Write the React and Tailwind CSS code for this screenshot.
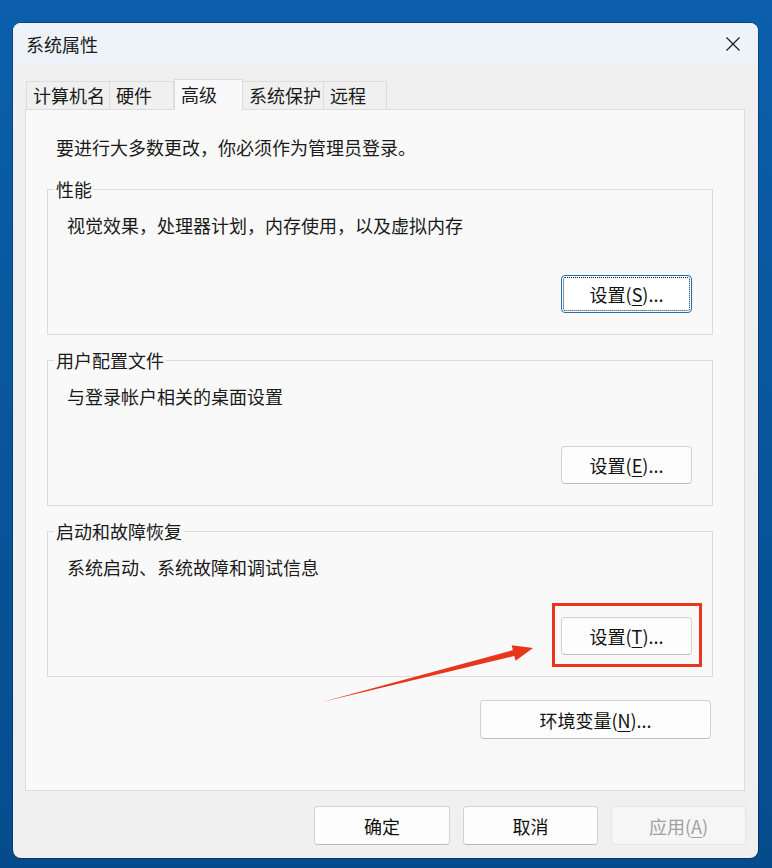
import React from 'react';

const FONT = { fontFamily: "'Noto Sans CJK SC', 'Noto Sans', sans-serif" };

const TABS = [
  { label: '计算机名', w: 'w-[84px]' },
  { label: '硬件', w: 'w-[65px]' },
  { label: '高级', w: 'w-[69px]', active: true },
  { label: '系统保护', w: 'w-[82px]' },
  { label: '远程', w: 'w-[64px]' },
];

const Key = ({ children }) => (
  <span className="underline underline-offset-[3px] decoration-1">{children}</span>
);

const Button = ({ children, className = '', focused, disabled }) => (
  <button
    className={
      'relative flex items-center justify-center rounded-[4px] border text-[18px] leading-none ' +
      (focused
        ? 'border-[#1a6fc4] bg-white text-[#111] '
        : disabled
        ? 'border-[#e6e6e6] bg-[#f6f6f6] text-[#a0a0a0] '
        : 'border-[#d2d2d2] border-b-[#bcbcbc] bg-[#fdfdfd] text-[#111] ') +
      className
    }
  >
    {focused && (
      <span className="absolute inset-[1px] rounded-[2px] border border-dotted border-[#222]" />
    )}
    {children}
  </button>
);

const Group = ({ title, text, children, className = '' }) => (
  <fieldset className={'w-[666px] border border-[#dcdcdc] ' + className}>
    <legend className="ml-[6px] px-[2px] text-[18px] leading-[20px] text-[#1a1a1a]">{title}</legend>
    <div className="pl-[19px] pr-[20px] pb-[21px]">
      <p className="mt-[16px] text-[18px] leading-[20px] text-[#1a1a1a]">{text}</p>
      <div className="mt-[40px] flex justify-end">{children}</div>
    </div>
  </fieldset>
);

const CloseIcon = () => (
  <svg width="16" height="16" viewBox="0 0 16 16" fill="none" stroke="#1a1a1a" strokeWidth="1.2">
    <path d="M1.5 1.5 L14.5 14.5 M14.5 1.5 L1.5 14.5" />
  </svg>
);

export default function App() {
  return (
    <div
      className="relative h-[868px] w-[772px] overflow-hidden bg-gradient-to-b from-[#0b5fab] to-[#064c8d] pl-[13px] pt-[23px]"
      style={FONT}
    >
      <div className="flex h-[835px] w-[745px] flex-col overflow-hidden rounded-[8px] bg-[#f0f0f0] shadow-[0_0_0_1px_rgba(0,0,0,0.25)]">
        {/* title bar */}
        <div className="flex h-[42px] shrink-0 items-center justify-between bg-[#eef3f9] pl-[13px] pr-[17px]">
          <span className="text-[18px] leading-none text-[#1a1a1a]">系统属性</span>
          <CloseIcon />
        </div>

        <div className="px-[12px] pt-[14px]">
          {/* tabs */}
          <div className="relative z-10 -mb-px flex h-[31px] items-end pl-px">
            {TABS.map((t) =>
              t.active ? (
                <div
                  key={t.label}
                  className={t.w + ' flex h-[31px] items-center border border-b-0 border-[#dcdcdc] bg-[#f9f9f9] pl-[6px] pb-[2px] text-[18px] text-[#1a1a1a]'}
                >
                  {t.label}
                </div>
              ) : (
                <div
                  key={t.label}
                  className={t.w + ' -ml-px mb-px flex h-[28px] items-center border border-b-0 border-[#dcdcdc] bg-[#f0f0f0] pl-[6px] text-[18px] text-[#1a1a1a] first:ml-0'}
                >
                  {t.label}
                </div>
              )
            )}
          </div>

          {/* tab page */}
          <div className="h-[682px] w-[720px] border border-[#dcdcdc] bg-[#f9f9f9] px-[21px] pt-[27px]">
            <p className="pl-[9px] text-[18px] leading-[20px] text-[#1a1a1a]">要进行大多数更改，你必须作为管理员登录。</p>

            <Group title="性能" text="视觉效果，处理器计划，内存使用，以及虚拟内存" className="mt-[22px]">
              <Button focused className="h-[38px] w-[131px]">
                设置(<Key>S</Key>)...
              </Button>
            </Group>

            <Group title="用户配置文件" text="与登录帐户相关的桌面设置" className="mt-[15px]">
              <Button className="h-[38px] w-[131px]">
                设置(<Key>E</Key>)...
              </Button>
            </Group>

            <Group title="启动和故障恢复" text="系统启动、系统故障和调试信息" className="mt-[15px]">
              <Button className="h-[38px] w-[131px]">
                设置(<Key>T</Key>)...
              </Button>
            </Group>

            <div className="mt-[23px] flex w-[666px] justify-end pr-[2px]">
              <Button className="h-[39px] w-[231px]">
                环境变量(<Key>N</Key>)...
              </Button>
            </div>
          </div>

          {/* dialog buttons */}
          <div className="flex justify-end gap-[13px] pt-[15px]">
            <Button className="h-[39px] w-[136px]">确定</Button>
            <Button className="h-[39px] w-[135px]">取消</Button>
            <Button disabled className="h-[39px] w-[135px]">
              应用(<Key>A</Key>)
            </Button>
          </div>
        </div>
      </div>

      {/* annotation: highlight box and arrow */}
      <div className="absolute left-[552px] top-[603px] h-[64px] w-[150px] border-[3px] border-[#e8361c]" />
      <svg className="pointer-events-none absolute left-0 top-0" width="772" height="868">
        <polygon
          fill="#e8361c"
          points="322,702 512.9,650.1 511.6,645.3 533,648 515.6,660.7 514.3,655.9"
        />
      </svg>
    </div>
  );
}
